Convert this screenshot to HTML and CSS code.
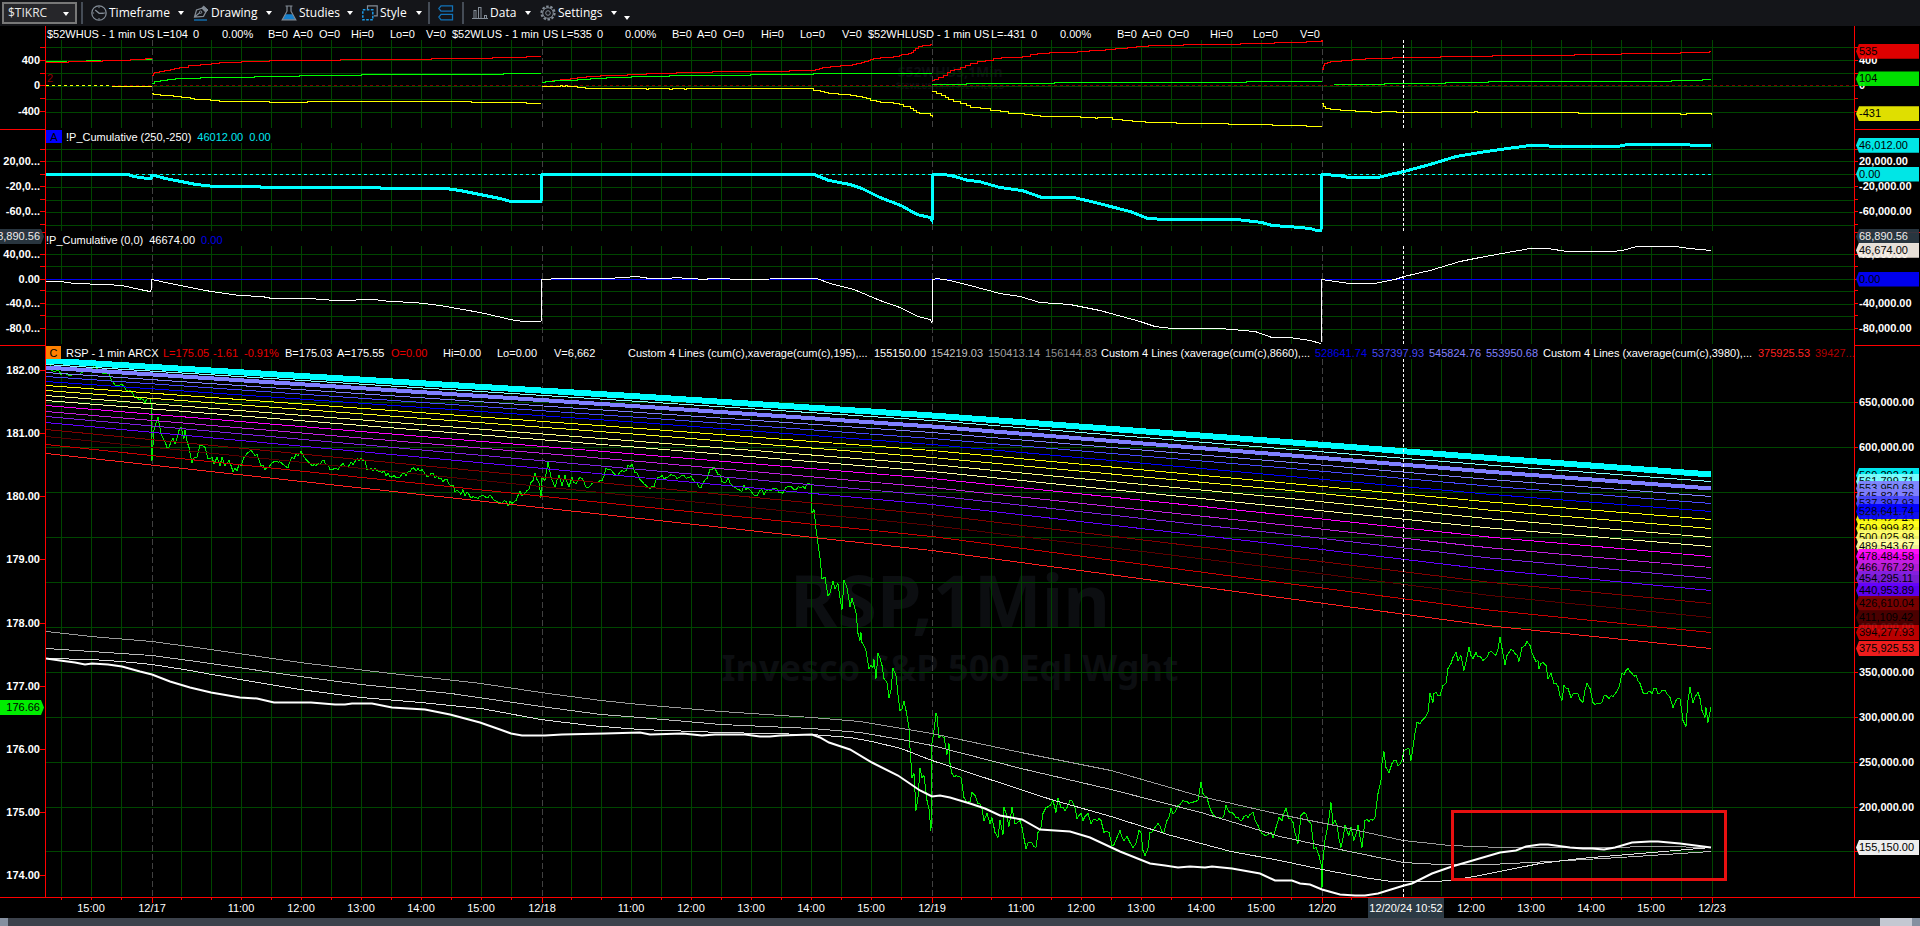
FILE: index.html
```html
<!DOCTYPE html>
<html lang="en">
<head>
<meta charset="utf-8">
<title>RSP - 1 min</title>
<link rel="stylesheet" href="styles.css">
</head>
<body>
<header class="toolbar">
  <label class="symbol">
    <select aria-label="Symbol"><option>$TIKRC</option></select>
    <i class="caret"></i>
  </label>
  <i class="sep"></i>
  <button class="tool w-timeframe">
    <svg width="16" height="16" viewBox="0 0 16 16" fill="none" stroke="#848d97"><circle cx="8" cy="8" r="7.2" stroke-width="1.2"/><path d="M4.2 5l4 3.4 4.6-.2" stroke-width="1.4"/><path d="M8 1.5v1.6M8 13v1.5M1.5 8h1.6M13 8h1.5"/></svg>
    <span>Timeframe</span><i class="caret"></i>
  </button>
  <button class="tool w-drawing">
    <svg width="16" height="16" viewBox="0 0 16 16" fill="none" stroke="#848d97"><path d="M1.5 12l2-7L9 3.2l3.8 3.8-2.3 4.4-9 .6zM1.5 12L7 7.5" stroke-width="1.2"/><path d="M9 3l1.6-2L15 5l-2 2z" fill="#848d97"/><circle cx="7.6" cy="7.2" r="1.2"/><path d="M1 15h13" stroke="#1273b8" stroke-width="1.4"/></svg>
    <span>Drawing</span><i class="caret"></i>
  </button>
  <button class="tool w-studies">
    <svg width="16" height="16" viewBox="0 0 16 16"><path d="M4.6 9.2h6.8l3.3 5.6H1.3z" fill="#1580cc"/><path d="M4.5 1h7M6 1v5.2L1.2 14.8h13.6L10 6.2V1" fill="none" stroke="#848d97" stroke-width="1.2"/></svg>
    <span>Studies</span><i class="caret"></i>
  </button>
  <button class="tool w-style">
    <svg width="16" height="16" viewBox="0 0 16 16" fill="none"><path d="M5.5 4V.8h9.7v10h-3.4" stroke="#848d97" stroke-width="1.2"/><rect x=".8" y="4.8" width="10" height="10" stroke="#1b9be8" stroke-width="1.5" stroke-dasharray="2.6 1.4"/></svg>
    <span>Style</span><i class="caret"></i>
  </button>
  <i class="sep"></i>
  <button class="tool w-link" aria-label="Link panes">
    <svg width="16" height="16" viewBox="0 0 16 16" fill="none" stroke="#1273b8" stroke-width="1.3"><path d="M3 .8h11.5v5.4H3L.8 3.5z"/><path d="M3 9.4h11.5v5.4H3L.8 12z"/></svg>
  </button>
  <i class="sep"></i>
  <button class="tool w-data">
    <svg width="16" height="16" viewBox="0 0 16 16" fill="none" stroke="#848d97"><path d="M0 13.5h16"/><rect x="2" y="5.5" width="2" height="8"/><rect x="6.5" y="2.5" width="2.5" height="11"/><rect x="12.5" y="10.5" width="2" height="3"/></svg>
    <span>Data</span><i class="caret"></i>
  </button>
  <button class="tool w-settings">
    <svg width="16" height="16" viewBox="0 0 16 16" fill="none" stroke="#848d97"><circle cx="8" cy="8" r="6.6" stroke-width="2" stroke-dasharray="2.5 1.65"/><circle cx="8" cy="8" r="5.3"/><circle cx="8" cy="8" r="2.3"/></svg>
    <span>Settings</span><i class="caret"></i>
  </button>
  <button class="tool more" aria-label="More tools"><i class="caret"></i></button>
</header>

<main class="chart">
  <section class="pane pane-highs" data-pane="highs">
    <div class="axis axis-left"></div>
    <div class="plot">
      <div class="watermark small"><b>$52WHUS,1Min</b><b>$52WLUS,1Min $52WHLUSD</b></div>
      <div class="info info-highs">
        <span>$52WHUS - 1 min</span><span>US</span><span>L=104</span><span>0</span><span>0.00%</span><span>B=0</span><span>A=0</span><span>O=0</span><span>Hi=0</span><span>Lo=0</span><span>V=0</span>
        <span>$52WLUS - 1 min</span><span>US</span><span>L=535</span><span>0</span><span>0.00%</span><span>B=0</span><span>A=0</span><span>O=0</span><span>Hi=0</span><span>Lo=0</span><span>V=0</span>
        <span>$52WHLUSD - 1 min</span><span>US</span><span>L=-431</span><span>0</span><span>0.00%</span><span>B=0</span><span>A=0</span><span>O=0</span><span>Hi=0</span><span>Lo=0</span><span>V=0</span>
      </div>
      <span class="marker">2</span>
    </div>
    <div class="axis axis-right"></div>
  </section>

  <section class="pane pane-cum-a" data-pane="cumA">
    <div class="axis axis-left"></div>
    <div class="plot">
      <div class="info info-cum">
        <span class="badge badge-a">A</span><span>!P_Cumulative (250,-250)</span><span class="cyan">46012.00</span><span class="cyan">0.00</span>
      </div>
    </div>
    <div class="axis axis-right"></div>
  </section>

  <section class="pane pane-cum-b" data-pane="cumB">
    <div class="axis axis-left"></div>
    <div class="plot">
      <div class="info info-cum">
        <span>!P_Cumulative (0,0)</span><span>46674.00</span><span class="blue">0.00</span>
      </div>
    </div>
    <div class="axis axis-right"></div>
  </section>

  <section class="pane pane-price" data-pane="price">
    <div class="axis axis-left"></div>
    <div class="plot">
      <div class="watermark"><b class="wm-title">RSP,1Min</b><b class="wm-name">Invesco S&amp;P 500 Eql Wght</b></div>
      <div class="info info-price">
        <span class="badge badge-c">C</span><span>RSP - 1 min</span><span>ARCX</span><span class="red">L=175.05</span><span class="red">-1.61</span><span class="red">-0.91%</span><span>B=175.03</span><span>A=175.55</span><span class="red">O=0.00</span><span>Hi=0.00</span><span>Lo=0.00</span><span>V=6,662</span>
        <span>Custom 4 Lines (cum(c),xaverage(cum(c),195),...</span><span>155150.00</span><span class="g1">154219.03</span><span class="g2">150413.14</span><span class="g3">156144.83</span>
        <span>Custom 4 Lines (xaverage(cum(c),8660),...</span><span class="blue">528641.74</span><span class="b2">537397.93</span><span class="b3">545824.76</span><span class="b3">553950.68</span>
        <span>Custom 4 Lines (xaverage(cum(c),3980),...</span><span class="r1">375925.53</span><span class="r2">39427...</span>
      </div>
    </div>
    <div class="axis axis-right"></div>
  </section>
</main>

<div class="time-row">
  <div class="corner"></div>
  <div class="time-axis" id="time-axis"></div>
  <div class="corner"></div>
</div>
<div class="scrollbar">
  <button class="scroll-end" aria-label="Scroll left"></button>
  <div class="scroll-track"></div>
  <button class="scroll-thumb" aria-label="Scroll position"></button>
  <button class="scroll-end" aria-label="Scroll right"></button>
</div>
<script src="chart.js"></script>
</body>
</html>
```

FILE: styles.css
```css
* { box-sizing: border-box; }

html, body { height: 100%; }

body {
  margin: 0;
  display: flex;
  flex-direction: column;
  background: #000;
  color: #fff;
  font: 11px/14px "Liberation Sans", Arial, sans-serif;
  overflow: hidden;
}

button {
  margin: 0;
  padding: 0;
  border: 0;
  background: none;
  color: inherit;
}

/* toolbar */
.toolbar {
  flex: none;
  display: flex;
  align-items: center;
  height: 26px;
  padding-left: 2px;
  background: #141519;
  font: 12px/16px "Open Sans", sans-serif;
}

.symbol {
  position: relative;
  width: 75px;
  height: 22px;
}

.symbol select {
  appearance: none;
  width: 100%;
  height: 100%;
  padding: 0 4px;
  border: 2px solid #787878;
  border-radius: 0;
  background: #26262a;
  color: #e8e8e8;
  font: 12px/16px "Open Sans", sans-serif;
}

.symbol .caret {
  position: absolute;
  right: 8px;
  top: 10px;
}

.caret {
  flex: none;
  width: 0;
  height: 0;
  border: 3px solid transparent;
  border-top: 4px solid #fff;
  border-bottom: 0;
}

.sep {
  flex: none;
  width: 2px;
  height: 22px;
  margin: 0 8px 0 4px;
  background: #454c56;
}

.tool {
  flex: none;
  display: flex;
  align-items: center;
  gap: 2px;
  height: 22px;
  font: inherit;
}

.tool svg { flex: none; }

.tool .caret { margin-left: auto; }

.w-timeframe { width: 102px; padding-right: 9px; }
.w-drawing { width: 88px; padding-right: 9px; }
.w-studies { width: 81px; padding-right: 9px; }
.w-style { width: 62px; padding-right: 2px; }
.w-link { width: 20px; }
.w-data { width: 68px; padding-right: 9px; }
.w-settings { width: 77px; }
.more { width: 13px; padding-top: 10px; }

/* panes */
.chart {
  flex: 1;
  min-height: 0;
  display: grid;
  grid-template-rows: 104fr 103fr 113fr 552fr;
}

.pane {
  display: grid;
  grid-template-columns: 46px minmax(0, 1fr) 66px;
  min-height: 0;
}

.pane-price { border-bottom: 1px solid #f00; }

.axis {
  position: relative;
  border-bottom: 1px solid #f00;
  font-weight: bold;
}

.pane-price .axis { border-bottom: 0; }

.axis-left { border-right: 1px solid #f00; }
.axis-right { border-left: 1px solid #f00; z-index: 2; }

.tick {
  position: absolute;
  width: 5px;
  height: 1px;
  background: #f00;
}

.axis-left .tick { right: 0; }
.axis-right .tick { left: 0; width: 3px; }

.axis-label {
  position: absolute;
  margin-top: -7px;
  white-space: nowrap;
}

.axis-left .axis-label { right: 5px; }
.axis-right .axis-label { left: 4px; }

.tag {
  position: absolute;
  height: 15px;
  margin-top: -7px;
  line-height: 15px;
  font-weight: normal;
  color: #000;
  opacity: 0.93;
  white-space: nowrap;
}

.axis-right .tag {
  left: 1px;
  width: 63px;
  padding-left: 3px;
  clip-path: polygon(0 50%, 3px 0, 100% 0, 100% 100%, 3px 100%);
}

.axis-left .tag {
  left: 0;
  width: 44px;
  display: flex;
  justify-content: flex-end;
  padding-right: 4px;
  overflow: hidden;
  clip-path: polygon(0 0, 41px 0, 100% 50%, 41px 100%, 0 100%);
}

.tag.light { color: #fff; }

.plot {
  position: relative;
  min-width: 0;
  display: grid;
  grid-template: minmax(0, 1fr) / minmax(0, 1fr);
}

.plot > * { grid-area: 1 / 1; }

.plot svg {
  z-index: 1;
  width: 100%;
  height: 100%;
  min-height: 0;
  overflow: hidden;
}

.plot path, .plot line, .plot rect {
  fill: none;
  vector-effect: non-scaling-stroke;
  shape-rendering: crispEdges;
}

.plot .smooth { shape-rendering: auto; }

.info {
  z-index: 2;
  align-self: start;
  display: grid;
  height: 13px;
  background: #000;
  white-space: nowrap;
  overflow: hidden;
}

.info-highs {
  height: 14px;
  padding-left: 1px;
  line-height: 16px;
  grid-template-columns:
    92px 18px 36px 29px 46px 25px 26px 32px 39px 36px 26px
    91px 18px 36px 28px 47px 25px 26px 38px 39px 42px 26px
    106px 17px 40px 29px 57px 25px 26px 42px 43px 47px 1fr;
}

.info-cum {
  display: flex;
  gap: 6px;
}

.info-cum .badge { margin-right: -2px; }

.info-price {
  grid-template-columns:
    20px 62px 35px 50px 31px 41px 52px 54px 52px 54px 57px 74px
    246px 57px 57px 57px 56px 214px 57px 57px 57px 57px
    215px 57px 1fr;
}

.badge {
  width: 16px;
  text-align: center;
  color: #000;
}

.badge-a { background: #00f; }
.badge-c { width: 15px; background: #ff8000; }

.cyan { color: #00e8f0; }
.blue { color: #0000e8; }
.red { color: #e80000; }
.g1 { color: #c0c0c0; }
.g2 { color: #a0a0a0; }
.g3 { color: #909090; }
.b2 { color: #4848f8; }
.b3 { color: #8080ff; }
.r1 { color: #ff2020; }
.r2 { color: #b00000; }

.marker {
  z-index: 2;
  align-self: center;
  justify-self: start;
  padding-left: 1px;
  color: #900000;
}

.watermark {
  display: flex;
  flex-direction: column;
  align-items: center;
  justify-content: center;
  gap: 8px;
  padding-top: 8px;
  color: #0c0e11;
  font-family: "Noto Sans", sans-serif;
  white-space: nowrap;
}

.wm-title { font-size: 72px; line-height: 76px; }
.wm-name { font-size: 36px; line-height: 46px; }

.watermark.small {
  gap: 0;
  padding-top: 0;
  font-size: 14px;
  line-height: 16px;
}

.watermark.small b + b { font-size: 8px; line-height: 12px; }

/* time axis */
.time-row {
  flex: none;
  display: grid;
  grid-template-columns: 46px minmax(0, 1fr) 66px;
  height: 20px;
}

.time-axis { position: relative; }

.time-tick {
  position: absolute;
  top: 0;
  width: 1px;
  height: 2px;
  background: #f00;
}

.time-tick.day { height: 5px; }

.time-label {
  position: absolute;
  top: 3px;
  transform: translateX(-50%);
  white-space: nowrap;
}

.time-cursor {
  position: absolute;
  top: 0;
  width: 76px;
  height: 20px;
  margin-left: -35px;
  line-height: 20px;
  text-align: center;
  background: #2c3a44;
}

.scrollbar {
  flex: none;
  display: flex;
  height: 8px;
  background: #3c424c;
}

.scroll-track { flex: 1; }
.scroll-end { width: 8px; background: #8590a0; }
.scroll-thumb { width: 32px; background: #c4c8d2; }
```

FILE: chart.js
```js
const NS = 'http://www.w3.org/2000/svg';
const X0 = 46, X1 = 1854, W = X1 - X0, LAST = 1711;
const CURSOR = 1403;
const days = [152, 542, 932, 1322, 1712];

const halfHours = [61, 91, 121];
for (let k = 0; k < 4; k++)
  for (let j = 0; j < 12; j++) halfHours.push(181 + 30 * j + 390 * k);

const panes = {
  highs: {
    top: 26, height: 104, from: 40, to: 128,
    rows: [47, 60, 73, 86, 99, 112],
    left: { 60: '400', 86: '0', 112: '-400' },
    right: { 60: '400', 86: '0' },
    tags: [[51, '535', '#f00000'], [79, '104', '#00f000'], [114, '-431', '#f0f000']],
    flat: [[85, '#800000', X1, '3 3']],
    step: true,
    lines: [
      ['#0f0', 1, '46,61 67,61'], ['#0f0', 1, '86,60 101,60'], ['#0f0', 1, '145,59 152,59'],
      ['#f00', 1, '46,62 68,61 102,60 130,59 145,58 152,58'],
      ['#f00', 1, '152,75 153,73 154,72 159,71 164,70 170,69 174,68 179,67 188,65 200,64 211,63 219,62 241,61 269,60 340,59 431,58 492,57 526,56 541,56'],
      ['#0f0', 1, '152,83 154,81 160,80 167,79 175,78 200,77 254,76 299,75 361,74 503,73 541,73'],
      ['#ff0', 1, '112,86 152,86'],
      ['#ff0', 1, '152,93 153,94 160,95 173,96 181,97 190,98 194,99 210,100 219,101 269,102 307,101 471,102 526,103 541,103'],
      ['#f00', 1, '542,82 545,81 552,80 560,79 570,78 577,77 586,76 600,75 627,74 646,73 676,72 712,71 789,70 813,70 815,69 819,68 822,67 830,66 840,65 852,64 856,63 861,62 864,61 868,60 870,59 873,58 880,57 893,56 899,55 901,54 908,53 911,52 913,50 915,48 918,46 922,45 930,44 932,44'],
      ['#0f0', 1, '542,82 545,81 554,80 577,79 590,78 606,77 631,76 669,75 750,74 813,73 932,73'],
      ['#ff0', 1, '542,86 560,85 562,86 565,85 567,86 577,87 585,88 646,89 648,88 669,89 672,88 684,89 686,88 813,90 820,91 824,92 828,93 838,94 850,95 856,96 862,97 866,98 870,100 876,101 880,102 893,103 899,104 903,106 910,108 913,110 916,112 919,113 930,115 932,116'],
      ['#f00', 1, '932,80 934,79 938,77 943,75 947,72 950,70 954,69 960,67 965,65 970,63 977,61 985,60 993,58 1001,57 1022,56 1030,54 1037,53 1049,52 1077,51 1089,50 1105,49 1115,48 1127,47 1136,46 1148,45 1183,44 1240,43 1274,42 1306,41 1321,40 1322,41'],
      ['#0f0', 1, '932,84 966,83 1054,82 1246,81 1322,81'],
      ['#ff0', 1, '932,91 936,93 941,95 945,97 948,99 953,101 960,103 966,105 970,107 980,108 990,110 1000,111 1008,113 1024,114 1032,115 1040,116 1080,117 1095,118 1097,117 1112,119 1122,120 1132,121 1145,122 1176,123 1228,124 1272,125 1306,126 1322,126'],
      ['#f00', 1, '1322,69 1323,65 1324,63 1327,62 1330,61 1341,60 1352,59 1365,58 1392,57 1440,56 1492,55 1574,54 1621,53 1680,52 1709,51 1711,51'],
      ['#0f0', 1, '1334,84 1384,83 1445,82 1488,81 1671,80 1702,79 1711,79'],
      ['#ff0', 1, '1322,103 1323,106 1325,108 1330,109 1340,110 1355,111 1371,112 1381,111 1396,112 1474,111 1477,112 1578,113 1680,114 1686,113 1711,114']
    ]
  },
  cumA: {
    top: 130, height: 103, from: 143, to: 231,
    rows: [149, 161, 174, 187, 200, 212, 225],
    left: { 161: '20,00...', 187: '-20,0...', 212: '-60,0...' },
    right: { 161: '20,000.00', 187: '-20,000.00', 212: '-60,000.00' },
    tags: [[145, '46,012.00', '#00f8f8'], [174, '0.00', '#00f8f8']],
    flat: [[174, '#0ff', LAST, '3 3']],
    lines: [
      ['#0ff', 3, '46,174 128,174 134,176 147,178 151,178 152,175 155,175 165,178 181,181 196,184 215,186 259,186 262,187 379,187 382,188 446,188 460,190 480,194 500,198 511,201 541,201 542,174 814,174 829,180 850,184 862,188 880,197 901,205 910,210 917,214 930,217 932,220 933,174 944,174 955,176 968,180 979,181 1000,187 1022,190 1042,197 1074,197 1095,202 1130,211 1148,218 1165,219 1237,219 1262,222 1272,225 1288,226 1310,228 1317,230 1321,230 1322,174 1339,175 1349,177 1378,177 1390,174 1404,171 1430,164 1456,156 1480,152 1500,149 1530,145 1548,145 1550,146 1618,146 1627,144 1680,144 1700,145 1711,145']
    ]
  },
  cumB: {
    top: 233, height: 113, from: 246, to: 344,
    rows: [254, 266, 279, 291, 304, 316, 329],
    left: { 254: '40,00...', 279: '0.00', 304: '-40,0...', 329: '-80,0...' },
    right: { 254: '40,000.00', 304: '-40,000.00', 329: '-80,000.00' },
    leftTags: [[236, '68,890.56', '#2c3a44', true]],
    tags: [[236, '68,890.56', '#2c3a44', true], [250, '46,674.00', '#f8f0e8'], [279, '0.00', '#0000ff']],
    flat: [[279, '#0000f0', LAST, null]],
    lines: [
      ['#fff', 1, '46,281 60,281 75,283 105,284 122,285 140,289 150,291 151,290 152,279 170,283 211,291 240,295 262,296 272,298 310,298 335,300 352,300 360,299 374,299 390,301 415,302 440,305 480,312 515,320 525,321 541,321 542,279 560,278 605,278 625,277 636,276 650,278 670,278 674,277 690,278 705,279 710,278 750,279 790,278 817,278 830,283 854,289 880,300 900,307 918,316 930,319 932,322 933,279 937,278 950,280 970,285 1000,293 1020,296 1040,302 1070,304 1100,310 1140,321 1155,326 1172,328 1220,328 1255,331 1272,337 1290,337 1310,340 1321,343 1322,279 1335,281 1350,283 1374,283 1395,279 1404,276 1430,270 1460,261 1480,257 1502,253 1530,248 1548,248 1567,251 1612,251 1622,250 1637,246 1675,246 1690,248 1711,250']
    ]
  },
  price: {
    top: 346, height: 552, from: 359, to: 896,
    rows: [402, 447, 492, 537, 582, 627, 672, 717, 762, 807, 851],
    leftTicks: [370, 433, 496, 559, 623, 686, 749, 812, 875],
    left: { 370: '182.00', 433: '181.00', 496: '180.00', 559: '179.00', 623: '178.00', 686: '177.00', 749: '176.00', 812: '175.00', 875: '174.00' },
    right: { 402: '650,000.00', 447: '600,000.00', 627: '400,000.00', 672: '350,000.00', 717: '300,000.00', 762: '250,000.00', 807: '200,000.00' },
    leftTags: [[707, '176.66', '#00ff00']],
    tags: [
      [475, '569,292.34', '#00f8ff'], [481, '561,799.71', '#80ffff'], [488, '553,950.68', '#8080ff'],
      [496, '545,824.76', '#8080ff'], [503, '537,397.93', '#4848ff'], [519, '519,522.43', '#ffff00'],
      [511, '528,641.74', '#0000ff'], [528, '509,999.82', '#ffff20'], [537, '500,025.98', '#ffff70'],
      [546, '489,543.67', '#ffffa0'], [556, '478,484.58', '#ff00ff'], [567, '466,767.29', '#c020e0'],
      [578, '454,295.11', '#8020e0'], [590, '440,953.89', '#6400ff'], [603, '426,610.04', '#800000'],
      [617, '411,109.42', '#500000'], [632, '394,277.93', '#c80000'], [648, '375,925.53', '#ff2020'],
      [847, '155,150.00', '#ffffff']
    ],
    flat: [],
    lines: []
  }
};

// Closing price, x,y pairs.
const price = '46,362 48,363 55,371 67,374 82,372 88,367 96,367 107,373 114,383 122,384 130,390 135,397 141,398 145,402 150,398 151,403 152,460 154,430 158,417 161,433 167,447 173,438 175,443 179,430 181,427 184,438 185,430 189,447 192,462 197,457 200,445 205,447 208,458 212,457 214,463 217,457 220,465 222,457 225,465 229,460 233,471 241,465 244,457 251,450 257,454 261,465 265,469 269,467 274,461 282,463 288,467 292,457 301,451 307,460 312,465 318,463 324,460 330,469 338,469 343,463 349,465 355,461 363,460 369,469 380,471 388,473 394,475 406,475 410,471 422,469 427,476 431,473 439,478 445,479 451,486 457,490 469,494 476,497 486,497 492,497 502,503 512,503 518,495 527,490 531,482 535,473 539,482 541,497 542,477 545,480 548,461 551,477 555,487 559,475 562,485 565,475 569,486 572,477 576,483 580,477 588,487 594,482 602,480 606,468 614,473 622,470 632,464 635,472 640,479 646,485 654,486 658,477 667,477 671,474 679,477 682,475 689,477 701,487 707,478 710,469 714,467 718,474 724,482 728,477 735,487 738,489 748,487 757,495 760,490 764,494 771,490 781,492 786,487 794,489 801,487 809,483 811,484 812,513 814,509 816,528 820,557 822,578 825,577 828,595 830,593 833,581 835,588 838,583 842,609 844,580 847,587 850,606 852,598 856,612 858,633 860,640 861,632 862,642 866,650 869,668 873,667 874,659 876,678 878,653 882,665 884,678 887,682 889,697 891,690 893,668 896,675 900,710 904,701 906,710 909,727 910,747 912,777 914,773 916,810 918,797 920,768 922,777 924,775 927,800 929,808 931,830 932,743 934,730 936,713 937,715 939,737 944,737 947,754 949,743 950,763 952,773 956,775 961,777 964,797 967,802 970,801 972,792 975,795 978,803 982,808 984,820 987,813 990,823 992,817 995,832 998,837 1000,820 1003,834 1004,807 1009,826 1012,807 1015,823 1020,820 1024,838 1026,848 1030,842 1036,847 1038,832 1041,827 1043,813 1046,807 1050,805 1053,800 1056,812 1058,798 1061,807 1067,807 1070,800 1075,807 1077,818 1081,813 1083,820 1088,813 1091,823 1101,820 1104,832 1109,832 1112,845 1117,837 1120,830 1124,840 1127,836 1130,842 1133,847 1136,843 1139,830 1141,832 1143,850 1145,855 1148,848 1150,832 1155,827 1158,823 1164,832 1167,820 1171,808 1173,813 1178,805 1183,800 1189,803 1198,800 1201,782 1203,793 1207,797 1211,810 1216,817 1224,815 1226,805 1232,812 1236,817 1248,817 1253,812 1258,825 1262,833 1271,832 1273,837 1276,827 1279,817 1282,820 1286,808 1289,818 1293,822 1298,843 1301,815 1304,812 1308,820 1311,823 1314,848 1316,847 1319,855 1321,863 1322,887 1323,860 1325,840 1328,825 1331,802 1333,823 1335,820 1337,825 1341,847 1345,825 1349,835 1351,827 1354,840 1358,825 1362,847 1365,820 1375,817 1378,793 1381,780 1382,763 1384,751 1386,767 1389,772 1392,763 1396,760 1398,765 1402,760 1404,750 1409,748 1411,760 1413,747 1415,733 1417,722 1420,723 1425,717 1428,712 1430,693 1433,702 1434,693 1440,695 1443,685 1446,683 1448,668 1451,663 1456,652 1458,660 1461,655 1464,670 1467,657 1469,647 1473,658 1476,652 1483,660 1489,652 1496,655 1500,637 1502,648 1505,664 1509,652 1513,650 1519,661 1522,647 1525,645 1527,641 1530,645 1534,657 1538,660 1539,668 1541,663 1546,665 1548,678 1551,673 1554,683 1558,686 1562,700 1564,685 1568,688 1571,697 1576,693 1583,702 1587,683 1590,688 1593,702 1600,703 1606,695 1609,698 1616,692 1619,687 1622,673 1628,668 1632,673 1636,675 1640,683 1643,692 1652,693 1656,688 1658,693 1665,690 1670,697 1673,707 1676,700 1680,698 1683,720 1686,726 1688,700 1690,687 1693,702 1698,692 1700,698 1702,710 1705,717 1706,707 1708,722 1711,707';

// Minute-to-minute flutter between the recorded turning points.
function flutter(str) {
  const pts = parse(str), out = [];
  let seed = 7;
  const rnd = () => (seed = (seed * 16807) % 2147483647) / 2147483647 - 0.5;
  pts.forEach((p, i) => {
    out.push(p);
    const q = pts[i + 1];
    if (!q) return;
    for (let x = p[0] + 2; x < q[0] - 1; x += 2) {
      const t = (x - p[0]) / (q[0] - p[0]);
      out.push([x, p[1] + (q[1] - p[1]) * t + rnd() * 6]);
    }
  });
  return out;
}

// Band values at five times across the window.
const bandX = [46, 640, 932, 1280, 1711];
const bands = [
  ['#00ffff', 6, [360, 396, 415, 441, 474]],
  ['#80ffff', 1, [364, 401, 420, 448, 481]],
  ['#8080ff', 4, [367, 406, 426, 454, 488]],
  ['#8080ff', 1, [372, 412, 432, 461, 496]],
  ['#4848ff', 1, [376, 417, 438, 467, 503]],
  ['#0000ff', 1, [381, 422, 444, 475, 511]],
  ['#ffff00', 1, [385, 428, 450, 482, 519]],
  ['#ffff20', 1, [390, 434, 457, 489, 528]],
  ['#ffff80', 1, [395, 441, 464, 497, 537]],
  ['#ffffa0', 1, [400, 447, 471, 506, 546]],
  ['#ff00ff', 1, [405, 454, 478, 514, 556]],
  ['#c020e0', 1, [411, 461, 487, 524, 567]],
  ['#8020e0', 1, [416, 469, 495, 533, 578]],
  ['#6400ff', 1, [422, 477, 504, 544, 590]],
  ['#800000', 1, [429, 486, 514, 556, 603]],
  ['#580000', 1, [436, 496, 525, 568, 617]],
  ['#c80000', 1, [444, 506, 536, 582, 632]],
  ['#ff2020', 1, [453, 518, 550, 597, 648]]
];
const P = panes.price.lines;
P.push(['#00f000', 1, flutter(price)]);
bands.forEach(([c, w, ys], i) => {
  const pts = bandX.map((x, j) => [x, ys[j]]);
  pts.splice(4, 0, [1490, (ys[3] + ys[4]) / 2 + i / 6]);
  P.push([c, w, pts]);
});
P.push(
  ['#999', 1, '46,631 91,636 152,641 211,649 300,662 391,673 481,683 541,692 601,700 640,704 721,711 812,717 860,721 932,733 1021,752 1111,770 1201,796 1280,814 1340,826 1403,840 1450,845 1500,847 1600,847 1660,846 1711,847'],
  ['#bbb', 1, '46,648 91,651 152,655 211,663 300,676 361,684 451,693 541,706 601,714 640,717 721,724 812,728 860,732 901,739 932,745 1021,768 1111,789 1201,812 1280,836 1340,849 1403,862 1440,864 1490,864 1550,861 1620,857 1711,851'],
  ['#ddd', 1, '46,658 91,659 121,661 152,664 190,670 240,679 300,689 361,697 421,702 481,708 541,719 590,725 640,729 721,732 812,734 850,737 872,741 901,748 932,760 990,779 1051,799 1111,816 1171,835 1231,851 1280,860 1322,869 1370,878 1392,881 1435,881 1450,880 1480,875 1540,863 1580,858 1640,853 1711,847'],
  ['#fff', 2, '46,658 60,660 75,662 85,664 92,663 108,664 122,666 140,671 152,674 170,681 190,687 211,692 240,697 257,698 274,702 311,702 335,704 345,704 352,703 372,703 392,707 425,709 450,714 480,722 500,729 511,733 522,735 545,735 562,734 605,733 640,732 650,734 683,733 702,735 715,734 745,734 760,736 770,736 780,735 812,734 820,737 829,742 850,749 872,762 898,775 920,790 932,796 940,795 950,797 970,803 985,808 1000,815 1022,819 1040,829 1070,831 1090,837 1120,851 1150,863 1165,865 1178,867 1190,866 1205,867 1212,866 1232,868 1260,873 1275,880 1292,880 1300,883 1310,884 1322,889 1340,894 1355,895 1365,895 1378,893 1404,885 1412,883 1432,873 1452,866 1500,852 1516,850 1526,846 1540,844 1548,844 1570,847 1583,848 1592,848 1604,849 1615,847 1632,842 1650,841 1658,841 1680,843 1711,847', 'smooth']
);

function parse(str) {
  return str.split(' ').map(p => p.split(',').map(Number));
}

function node(svg, name, attrs) {
  const n = document.createElementNS(NS, name);
  for (const k in attrs) if (attrs[k] != null) n.setAttribute(k, attrs[k]);
  svg.appendChild(n);
  return n;
}

function div(parent, cls, text, style) {
  const n = document.createElement('span');
  n.className = cls;
  n.textContent = text;
  Object.assign(n.style, style);
  parent.appendChild(n);
}

const hair = (svg, x1, y1, x2, y2, stroke, dash) =>
  node(svg, 'line', { x1, y1, x2, y2, stroke, 'stroke-dasharray': dash });

for (const el of document.querySelectorAll('.pane')) {
  const p = panes[el.dataset.pane];
  const svg = document.createElementNS(NS, 'svg');
  svg.setAttribute('viewBox', `${X0} ${p.top} ${W} ${p.height}`);
  svg.setAttribute('preserveAspectRatio', 'none');
  const mark = el.querySelector('.watermark');
  const plot = el.querySelector('.plot');
  plot.insertBefore(svg, mark ? mark.nextSibling : plot.firstChild);

  p.rows.forEach(y => hair(svg, X0, y + 0.5, X1, y + 0.5, '#004600'));
  halfHours.concat(LAST + 1).forEach(x => hair(svg, x + 0.5, p.from, x + 0.5, p.to, '#004600'));
  days.slice(0, 4).forEach(x => hair(svg, x + 0.5, p.from, x + 0.5, p.to + 1, '#404040', '6 3'));
  p.flat.forEach(([y, c, x2, dash]) => hair(svg, X0, y + 0.5, x2, y + 0.5, c, dash));
  if (p.step) hair(svg, X0, 85.5, 112, 85.5, '#ffff00', '3 3');

  p.lines.forEach(([stroke, width, data, cls]) => {
    const pts = typeof data === 'string' ? parse(data) : data;
    const d = pts.map(([x, y], i) => {
      if (!i) return `M${x} ${y + 0.5}`;
      return p.step ? `H${x}V${y + 0.5}` : `L${x} ${y + 0.5}`;
    }).join('');
    node(svg, 'path', { d, stroke, 'stroke-width': width, class: cls });
  });

  hair(svg, CURSOR + 0.5, p.from, CURSOR + 0.5, p.to + 1, '#fff', '3 2');
  if (p === panes.price)
    node(svg, 'rect', { x: 1452.5, y: 811.5, width: 273, height: 68, stroke: '#e81010', 'stroke-width': 3 });

  const at = y => ({ top: (y - p.top) / p.height * 100 + '%' });
  const left = el.querySelector('.axis-left'), right = el.querySelector('.axis-right');
  (p.leftTicks || p.rows).forEach(y => div(left, 'tick', '', at(y)));
  p.rows.forEach(y => div(right, 'tick', '', at(y)));
  for (const y in p.left) div(left, 'axis-label', p.left[y], at(y));
  for (const y in p.right) div(right, 'axis-label', p.right[y], at(y));
  const tag = side => ([y, text, background, light]) =>
    div(side, light ? 'tag light' : 'tag', text, { ...at(y), background });
  (p.leftTags || []).forEach(tag(left));
  p.tags.forEach(tag(right));
}

const axis = document.getElementById('time-axis');
const across = x => ({ left: (x - X0) / W * 100 + '%' });
halfHours.forEach(x => div(axis, 'time-tick', '', across(x)));
days.forEach((x, k) => {
  div(axis, 'time-tick day', '', across(x));
  div(axis, 'time-label', ['12/17', '12/18', '12/19', '12/20', '12/23'][k], across(x));
  if (k < 4)
    for (let h = 11; h < 16; h++)
      if (k < 3 || h > 11) div(axis, 'time-label', h + ':00', across(x + 89 + 60 * (h - 11)));
});
div(axis, 'time-label', '15:00', across(91));
div(axis, 'time-cursor', '12/20/24 10:52', across(CURSOR));
```
